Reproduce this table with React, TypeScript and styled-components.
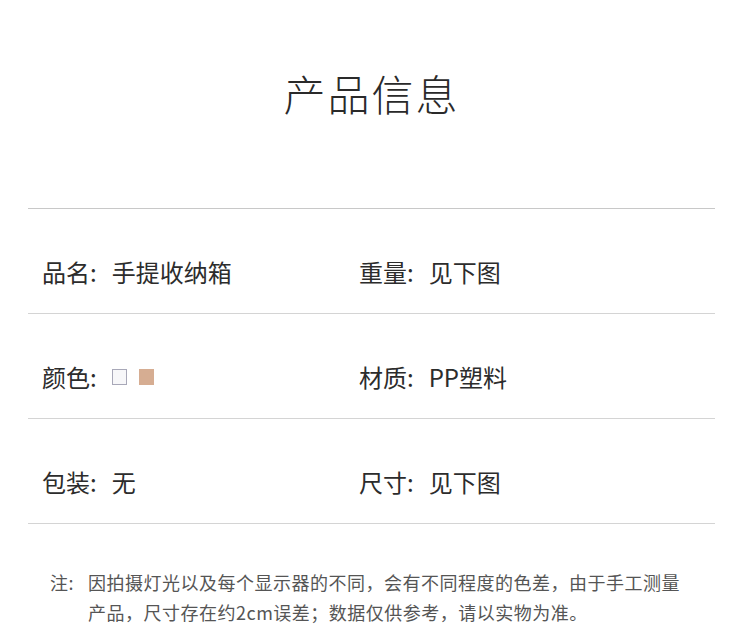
import styled, { createGlobalStyle } from "styled-components";

const Global = createGlobalStyle`
  html, body {
    margin: 0;
    padding: 0;
    background: #ffffff;
  }
  body {
    font-family: "Noto Sans CJK SC", "Noto Sans", sans-serif;
    color: #333333;
  }
`;

const Page = styled.div`
  width: 750px;
  height: 636px;
  box-sizing: border-box;
  padding: 0 35px 0 28px;
  overflow: hidden;
`;

const Header = styled.div`
  height: 209px;
  box-sizing: border-box;
  padding-top: 70px;
  display: flex;
  justify-content: center;
  border-bottom: 1px solid #c8c8c8;
`;

const Title = styled.h1`
  margin: 0;
  font-size: 42px;
  line-height: 46px;
  font-weight: 200;
  letter-spacing: 2px;
  color: #2a2a2a;
`;

const Row = styled.div`
  display: grid;
  grid-template-columns: 317px 1fr;
  align-items: center;
  height: 105px;
  box-sizing: border-box;
  padding: 22px 0 0 14px;
  border-bottom: 1px solid #d4d4d4;
`;

const Cell = styled.div`
  display: flex;
  align-items: center;
  font-size: 24px;
  line-height: 30px;
  color: #2c2c2c;
`;

const Label = styled.span`
  margin-right: 15px;
`;

const Swatch = styled.span<{ fill: string; edge: string }>`
  display: inline-block;
  width: 15px;
  height: 16px;
  box-sizing: border-box;
  background: ${(p) => p.fill};
  border: 1px solid ${(p) => p.edge};
  margin-right: 12px;
`;

const Note = styled.div`
  display: flex;
  padding: 43px 0 0 22px;
  font-size: 18px;
  line-height: 30px;
  letter-spacing: 0.5px;
  color: #555555;
`;

const NoteLabel = styled.span`
  flex: none;
  width: 38px;
`;

const NoteText = styled.p`
  margin: 0;
  width: 600px;
`;

type Spec = { label: string; value?: string; colors?: boolean };

const rows: [Spec, Spec][] = [
  [
    { label: "品名:", value: "手提收纳箱" },
    { label: "重量:", value: "见下图" },
  ],
  [
    { label: "颜色:", colors: true },
    { label: "材质:", value: "PP塑料" },
  ],
  [
    { label: "包装:", value: "无" },
    { label: "尺寸:", value: "见下图" },
  ],
];

function SpecCell({ label, value, colors }: Spec) {
  return (
    <Cell>
      <Label>{label}</Label>
      {colors ? (
        <>
          <Swatch fill="#f7f7f9" edge="#a8a8b8" />
          <Swatch fill="#d6ad92" edge="#d6ad92" />
        </>
      ) : (
        value
      )}
    </Cell>
  );
}

export default function App() {
  return (
    <Page>
      <Global />
      <Header>
        <Title>产品信息</Title>
      </Header>
      {rows.map((r, i) => (
        <Row key={i}>
          <SpecCell {...r[0]} />
          <SpecCell {...r[1]} />
        </Row>
      ))}
      <Note>
        <NoteLabel>注:</NoteLabel>
        <NoteText>
          因拍摄灯光以及每个显示器的不同，会有不同程度的色差，由于手工测量产品，尺寸存在约2cm误差；数据仅供参考，请以实物为准。
        </NoteText>
      </Note>
    </Page>
  );
}
